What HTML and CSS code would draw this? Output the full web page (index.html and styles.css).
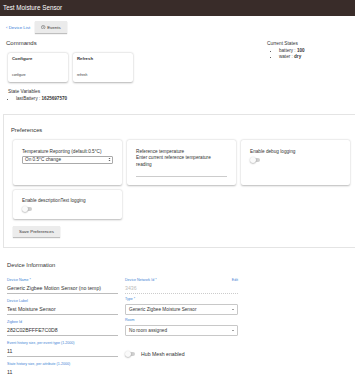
FILE: index.html
```html
<!DOCTYPE html>
<html>
<head>
<meta charset="utf-8">
<link rel="stylesheet" href="styles.css">
</head>
<body>
<header class="topbar">Test Moisture Sensor</header>
<main class="page">
  <nav class="crumbs">
    <a class="back">‹ Device List</a>
    <span class="btn-events"><svg class="clock" viewBox="0 0 10 10"><circle cx="5" cy="5" r="4" fill="none" stroke="#444" stroke-width="1"/><path d="M5 2.6V5.2L6.6 6.2" fill="none" stroke="#444" stroke-width="0.9"/></svg>Events</span>
  </nav>

  <section class="commands">
    <div class="cmd-left">
      <h2 class="h-commands">Commands</h2>
      <div class="cmd-cards">
        <div class="cmd-card"><div class="cmd-title">Configure</div><div class="cmd-sub">configure</div></div>
        <div class="cmd-card"><div class="cmd-title">Refresh</div><div class="cmd-sub">refresh</div></div>
      </div>
      <div class="state-vars">
        <div class="sv-title">State Variables</div>
        <ul class="bullets"><li>lastBattery : <b>1625697570</b></li></ul>
      </div>
    </div>
    <div class="current-states">
      <div class="cs-title">Current States</div>
      <ul class="bullets cs"><li>battery : <b>100</b></li><li>water : <b>dry</b></li></ul>
    </div>
  </section>

  <section class="prefs">
    <h2 class="h-section">Preferences</h2>
    <div class="pref-grid">
      <div class="pref-card tall">
        <div class="pref-label">Temperature Reporting (default:0.5°C)</div>
        <div class="mini-select"><span>On 0.5°C change</span><svg class="updown" viewBox="0 0 6 10"><path d="M1 4L3 2L5 4Z M1 6L3 8L5 6Z" fill="#333"/></svg></div>
      </div>
      <div class="pref-card tall">
        <div class="pref-label">Reference temperature</div>
        <div class="pref-label">Enter current reference temperature reading</div>
        <div class="pref-input"></div>
      </div>
      <div class="pref-card tall">
        <div class="pref-label">Enable debug logging</div>
        <span class="toggle"></span>
      </div>
      <div class="pref-card short">
        <div class="pref-label">Enable descriptionText logging</div>
        <span class="toggle"></span>
      </div>
    </div>
    <span class="btn-save">Save Preferences</span>
  </section>

  <section class="devinfo">
    <h2 class="h-section h-dev">Device Information</h2>
    <div class="fields">
      <div class="field">
        <div class="f-label">Device Name *</div>
        <div class="f-value">Generic Zigbee Motion Sensor (no temp)</div>
      </div>
      <div class="field">
        <div class="f-label f-row"><span>Device Network Id *</span><span class="edit">Edit</span></div>
        <div class="f-value disabled">3436</div>
      </div>
      <div class="field">
        <div class="f-label">Device Label</div>
        <div class="f-value">Test Moisture Sensor</div>
      </div>
      <div class="field">
        <div class="f-label up">Type *</div>
        <div class="f-select"><span>Generic Zigbee Moisture Sensor</span><span class="caret"></span></div>
      </div>
      <div class="field">
        <div class="f-label">Zigbee Id</div>
        <div class="f-value">282C02BFFFE7C0D8</div>
      </div>
      <div class="field">
        <div class="f-label up">Room</div>
        <div class="f-select"><span>No room assigned</span><span class="caret"></span></div>
      </div>
      <div class="field">
        <div class="f-label">Event history size, per event type (1-2000)</div>
        <div class="f-value">11</div>
      </div>
      <div class="field mesh">
        <span class="toggle"></span><span class="mesh-text">Hub Mesh enabled</span>
      </div>
      <div class="field">
        <div class="f-label">State history size, per attribute (1-2000)</div>
        <div class="f-value">11</div>
      </div>
    </div>
  </section>
</main>
</body>
</html>
```

FILE: styles.css
```css
html, body {
  margin: 0;
  padding: 0;
  background: #fff;
  overflow: hidden;
}
body {
  font-family: "Liberation Sans", Arial, sans-serif;
  color: #333;
}
.topbar {
  display: block;
  height: 16px;
  line-height: 16px;
  background: #392c29;
  color: #fff;
  font-size: 6.3px;
  padding-left: 3px;
}
.crumbs {
  display: flex;
  align-items: center;
  gap: 5px;
  height: 12px;
  margin-top: 5px;
  padding-left: 6px;
}
.back {
  color: #2f7bd6;
  font-size: 4.4px;
}
.btn-events {
  display: flex;
  align-items: center;
  gap: 1.5px;
  height: 12px;
  padding: 0 6px 0 6px;
  background: #ebebeb;
  box-shadow: 0 1px 1px rgba(0,0,0,.25);
  font-size: 4.4px;
  color: #333;
}
.clock { width: 4.5px; height: 4.5px; }

.commands {
  display: flex;
}
.cmd-left { width: 267px; }
.h-commands {
  margin: 6px 0 0 6px;
  font-weight: normal;
  font-size: 6px;
  line-height: 8px;
}
.cmd-cards {
  display: flex;
  gap: 5px;
  margin: 6px 0 0 8px;
}
.cmd-card {
  width: 60px;
  height: 29px;
  box-sizing: border-box;
  padding: 3px 4px 5px 4px;
  border-radius: 2px;
  box-shadow: 0 0.5px 2px rgba(0,0,0,.3);
  display: flex;
  flex-direction: column;
  justify-content: space-between;
}
.cmd-title { font-weight: bold; font-size: 4.3px; line-height: 5px; }
.cmd-sub { font-size: 3.3px; line-height: 4px; }
.state-vars { margin: 7px 0 0 8px; }
.sv-title, .cs-title { font-size: 4.8px; line-height: 6px; }
.bullets {
  margin: 1px 0 0 0;
  padding-left: 8px;
  font-size: 4.6px;
  line-height: 6px;
}
.bullets.cs { padding-left: 12px; }
.bullets li { list-style: disc; }
.bullets b { font-weight: bold; }
.current-states { padding-top: 8px; }

.prefs {
  margin: 12px 0 0 3px;
  border: 1px solid #e4e4e4;
  border-right: 0;
  padding: 11px 0 10px 9px;
}
.h-section {
  margin: 0;
  font-weight: normal;
  font-size: 5.8px;
  line-height: 8px;
}
.prefs .h-section { margin-left: -2px; }
.pref-grid {
  display: grid;
  grid-template-columns: repeat(3, 109px);
  column-gap: 5px;
  row-gap: 5px;
  margin-top: 6px;
}
.pref-card {
  box-sizing: border-box;
  border-radius: 2px;
  box-shadow: 0 0.5px 2px rgba(0,0,0,.28);
  padding: 9px 9px 0 9px;
}
.pref-card.tall { height: 45px; }
.pref-card.short { height: 29px; padding-top: 8px; }
.pref-label {
  font-size: 4.7px;
  line-height: 6.4px;
}
.mini-select {
  display: flex;
  justify-content: space-between;
  align-items: center;
  height: 6px;
  border: 0.5px solid #aaa;
  border-radius: 1px;
  padding: 0 1px 0 2px;
  font-size: 4.7px;
  margin-top: 0.5px;
}
.updown { width: 3px; height: 5px; }
.pref-input {
  margin-top: 8px;
  border-bottom: 1px solid #ccc;
}
.toggle {
  position: relative;
  display: block;
  width: 9px;
  height: 4px;
  margin: 3px 0 0 1px;
  border-radius: 2px;
  background: #cfcfcf;
}
.toggle::before {
  content: "";
  position: absolute;
  left: -1px;
  top: -1px;
  width: 6px;
  height: 6px;
  border-radius: 50%;
  background: #fafafa;
  box-shadow: 0 0.5px 1.5px rgba(0,0,0,.4);
}
.btn-save {
  display: inline-block;
  margin: 6px 0 0 0;
  height: 11px;
  line-height: 11px;
  padding: 0 6px;
  background: #ececec;
  box-shadow: 0 1px 1px rgba(0,0,0,.25);
  font-size: 4.4px;
  color: #333;
}

.devinfo {
  padding: 13px 0 0 7px;
}
.fields {
  display: grid;
  grid-template-columns: 111px 113px;
  column-gap: 7px;
  margin-top: 9px;
}
.field {
  height: 21px;
}
.f-label {
  font-size: 3.6px;
  line-height: 5px;
  color: #3d7fd4;
  white-space: nowrap;
}
.f-label.up { margin-top: -2px; }
.f-row {
  display: flex;
  justify-content: space-between;
}
.edit { color: #3d7fd4; }
.f-value {
  margin-top: 1.5px;
  font-size: 5.2px;
  line-height: 6px;
  padding-bottom: 2px;
  border-bottom: 0.5px solid #bdbdbd;
  white-space: nowrap;
}
.f-value.disabled {
  color: #bbb;
  border-bottom: 0.5px dotted #ccc;
}
.f-select {
  display: flex;
  justify-content: space-between;
  align-items: center;
  box-sizing: border-box;
  height: 11px;
  margin-top: 1.5px;
  border: 0.7px solid #c8c8c8;
  border-radius: 1px;
  padding: 0 3px;
  font-size: 4.7px;
}
.caret {
  width: 0;
  height: 0;
  border-left: 1.6px solid transparent;
  border-right: 1.6px solid transparent;
  border-top: 1.8px solid #444;
}
.mesh {
  display: flex;
  align-items: center;
  gap: 6px;
  padding-top: 4px;
  box-sizing: border-box;
}
.mesh .toggle { margin: 0 0 0 1px; }
.mesh-text { font-size: 5.2px; }
```
